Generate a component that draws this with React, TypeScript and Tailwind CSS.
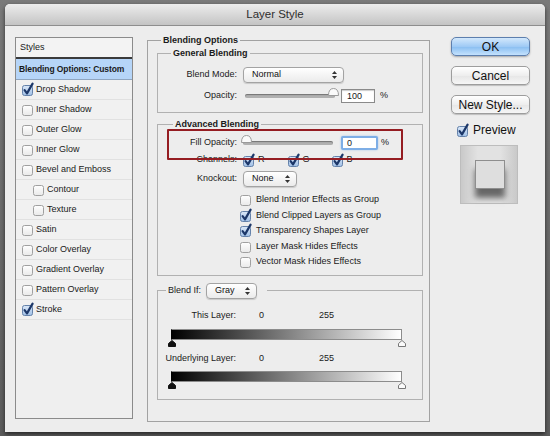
import React from "react";

function Checkbox({ checked = false }: { checked?: boolean }) {
  return (
    <svg width="12" height="13" viewBox="0 0 12 13" className="shrink-0 overflow-visible">
      <defs>
        <linearGradient id="cbu" x1="0" y1="0" x2="0" y2="1">
          <stop offset="0" stopColor="#ffffff" />
          <stop offset="1" stopColor="#e9e9e9" />
        </linearGradient>
        <linearGradient id="cbc" x1="0" y1="0" x2="0" y2="1">
          <stop offset="0" stopColor="#dbe8f8" />
          <stop offset="1" stopColor="#9fbfe6" />
        </linearGradient>
      </defs>
      <rect
        x="0.5"
        y="2.5"
        width="10"
        height="10"
        rx="2"
        fill={checked ? "url(#cbc)" : "url(#cbu)"}
        stroke={checked ? "#6582aa" : "#a0a0a0"}
      />
      {checked && (
        <path
          d="M2.6 7.2 L5 10.4 L10.6 0.6"
          fill="none"
          stroke="#1c3769"
          strokeWidth="2.2"
          strokeLinecap="round"
          strokeLinejoin="round"
        />
      )}
    </svg>
  );
}

function Arrows() {
  return (
    <svg width="5" height="8" viewBox="0 0 5 8" className="shrink-0">
      <path d="M2.5 0 L5 3 H0 Z" fill="#333" />
      <path d="M2.5 8 L5 5 H0 Z" fill="#333" />
    </svg>
  );
}

function Select({ label, className }: { label: string; className: string }) {
  return (
    <div
      className={`flex items-center justify-between h-[16px] rounded-[4px] border border-[#a3a3a3] bg-[linear-gradient(#ffffff,#ebebeb)] shadow-[0_1px_1px_rgba(0,0,0,0.15)] pl-[8px] pr-[6px] text-[9px] text-[#111] ${className}`}
    >
      <span>{label}</span>
      <Arrows />
    </div>
  );
}

function Knob() {
  return (
    <svg width="11" height="8" viewBox="0 0 11 8">
      <path d="M0.5 7.5 Q0.5 0.5 5.5 0.5 Q10.5 0.5 10.5 7.5 Z" fill="#fafafa" stroke="#9a9a9a" />
    </svg>
  );
}

function Slider({ right }: { right?: boolean }) {
  return (
    <div className="relative w-[90px] h-[12px] flex items-center">
      <div className="w-full h-[4px] rounded-full bg-[#b0b0b0] shadow-[inset_0_1px_1px_rgba(0,0,0,0.35)]" />
      <div className={`absolute top-[-2px] ${right ? "right-[-4px]" : "left-[-2px]"}`}>
        <Knob />
      </div>
    </div>
  );
}

function Marker({ dark }: { dark?: boolean }) {
  return (
    <svg width="8" height="7" viewBox="0 0 8 7">
      <path
        d="M4 0.5 L7.5 3.5 V6.5 H0.5 V3.5 Z"
        fill={dark ? "#111" : "#fbfbfb"}
        stroke={dark ? "#111" : "#777"}
        strokeWidth="1"
      />
    </svg>
  );
}

function GradientBar() {
  return (
    <div className="flex flex-col w-[231px]">
      <div className="h-[11px] border border-[#8c8c8c] border-l-black bg-[linear-gradient(to_right,#000000,#ffffff)]" />
      <div className="flex justify-between h-[7px] ml-[-3px] mr-[-4px]">
        <Marker dark />
        <Marker />
      </div>
    </div>
  );
}

function StyleRow({
  label,
  checked,
  indent,
}: {
  label: string;
  checked?: boolean;
  indent?: boolean;
}) {
  return (
    <div
      className={`flex items-center gap-[2px] h-[20px] border-b border-[#e1e1e1] bg-[#f1f1f1] ${
        indent ? "pl-[17px]" : "pl-[6px]"
      }`}
    >
      <Checkbox checked={checked} />
      <span className="text-[9px] text-[#1a1a1a]">{label}</span>
    </div>
  );
}

function Button({ label, primary }: { label: string; primary?: boolean }) {
  return (
    <div
      className={`flex items-center justify-center h-[19px] w-[79px] rounded-[5px] border text-[12px] text-[#111] ${
        primary
          ? "border-[#5d7fae] bg-[linear-gradient(#d3e8fc,#9fcaf5_50%,#88bdf1_51%,#c4e2fd)] shadow-[0_1px_2px_rgba(0,0,0,0.3)]"
          : "border-[#9d9d9d] bg-[linear-gradient(#ffffff,#eeeeee_50%,#e6e6e6_51%,#f6f6f6)] shadow-[0_1px_1px_rgba(0,0,0,0.2)]"
      }`}
    >
      {label}
    </div>
  );
}

export default function App() {
  return (
    <div className="w-[550px] h-[436px] bg-[linear-gradient(#7a7a7a,#5c5c5c)] pt-[4px] px-[5px] font-['Liberation_Sans',Arial,sans-serif] overflow-hidden">
      <div className="w-[540px] h-[428px] bg-[#ededed] rounded-t-[5px] flex flex-col shadow-[0_2px_4px_rgba(0,0,0,0.6)]">
        {/* title bar */}
        <div className="h-[22px] shrink-0 rounded-t-[5px] border-b border-[#8e8e8e] bg-[linear-gradient(#ececec,#c4c4c4)] flex items-center justify-center">
          <span className="text-[11.5px] text-[#2e2e2e]">Layer Style</span>
        </div>

        <div className="flex pl-[10px] pt-[9px]">
          {/* left styles list */}
          <div className="w-[118px] h-[382px] mt-[2px] border border-[#8b8b8b] bg-[#efefef] flex flex-col">
            <div className="h-[19px] flex items-center pl-[4px] text-[9px] text-[#1a1a1a] bg-[#f3f3f3]">
              Styles
            </div>
            <div className="h-[2px] bg-[#3a3a3a]" />
            <div className="h-[21px] flex items-center pl-[3px] bg-[#b6d5f8] border-b border-[#8fa5bf] text-[8.5px] font-bold text-[#1a1a1a] whitespace-nowrap tracking-[-0.1px]">
              Blending Options: Custom
            </div>
            <StyleRow label="Drop Shadow" checked />
            <StyleRow label="Inner Shadow" />
            <StyleRow label="Outer Glow" />
            <StyleRow label="Inner Glow" />
            <StyleRow label="Bevel and Emboss" />
            <StyleRow label="Contour" indent />
            <StyleRow label="Texture" indent />
            <StyleRow label="Satin" />
            <StyleRow label="Color Overlay" />
            <StyleRow label="Gradient Overlay" />
            <StyleRow label="Pattern Overlay" />
            <StyleRow label="Stroke" checked />
          </div>

          {/* main panel */}
          <fieldset className="ml-[14px] w-[283px] h-[387px] border border-[#a2a2a2] pl-[9px] pr-[6px] pt-[2px] text-[9px] text-[#1a1a1a]">
            <legend className="ml-[4px] px-[2px] h-[11px] leading-[11px] font-bold text-[9px]">
              Blending Options
            </legend>

            {/* General Blending */}
            <fieldset className="border border-[#b1b1b1] pb-[8px]">
              <legend className="ml-[13px] px-[2px] h-[11px] leading-[11px] font-bold">
                General Blending
              </legend>
              <div className="flex items-center h-[16px] mt-[8px]">
                <span className="w-[79px] text-right">Blend Mode:</span>
                <Select label="Normal" className="ml-[6px] w-[101px]" />
              </div>
              <div className="flex items-center h-[16px] mt-[5px]">
                <span className="w-[79px] text-right">Opacity:</span>
                <div className="ml-[8px]">
                  <Slider right />
                </div>
                <div className="ml-[6px] w-[34px] h-[14px] border border-[#8a8a8a] bg-white shadow-[inset_0_1px_1px_rgba(0,0,0,0.2)] pl-[5px] leading-[12px]">
                  100
                </div>
                <span className="ml-[5px]">%</span>
              </div>
            </fieldset>

            {/* Advanced Blending */}
            <fieldset className="relative mt-[6px] border border-[#b1b1b1] pb-[5px]">
              <legend className="ml-[15px] px-[2px] h-[11px] leading-[11px] font-bold">
                Advanced Blending
              </legend>
              <div className="flex items-center h-[16px] mt-[5px]">
                <span className="w-[79px] text-right">Fill Opacity:</span>
                <div className="ml-[6px]">
                  <Slider />
                </div>
                <div className="ml-[8px] w-[37px] h-[14px] border-2 border-[#7eaee6] rounded-[2px] bg-white pl-[4px] leading-[10px] shadow-[0_0_2px_#9cc3ef]">
                  0
                </div>
                <span className="ml-[3px]">%</span>
              </div>
              <div className="flex items-center h-[14px] mt-[2px]">
                <span className="w-[79px] text-right">Channels:</span>
                <div className="ml-[6px] flex items-center gap-[3px]">
                  <Checkbox checked />
                  <span>R</span>
                </div>
                <div className="ml-[23px] flex items-center gap-[3px]">
                  <Checkbox checked />
                  <span>G</span>
                </div>
                <div className="ml-[22px] flex items-center gap-[3px]">
                  <Checkbox checked />
                  <span>B</span>
                </div>
              </div>
              <div className="flex items-center h-[16px] mt-[4px]">
                <span className="w-[79px] text-right">Knockout:</span>
                <Select label="None" className="ml-[6px] w-[54px]" />
              </div>
              <div className="flex flex-col mt-[5px] ml-[82px]">
                {[
                  ["Blend Interior Effects as Group", false],
                  ["Blend Clipped Layers as Group", true],
                  ["Transparency Shapes Layer", true],
                  ["Layer Mask Hides Effects", false],
                  ["Vector Mask Hides Effects", false],
                ].map(([t, c]) => (
                  <div key={t as string} className="flex items-center gap-[4px] h-[15.5px]">
                    <Checkbox checked={c as boolean} />
                    <span>{t as string}</span>
                  </div>
                ))}
              </div>
              {/* annotation box */}
              <div className="absolute left-[9px] top-[-1px] w-[236px] h-[31px] border-2 border-[#951d22] rounded-[1px]" />
            </fieldset>

            {/* Blend If */}
            <fieldset className="mt-[7px] border border-[#b1b1b1] pb-[10px]">
              <legend className="ml-[8px] px-[2px] h-[16px] flex items-center gap-[5px]">
                <span>Blend If:</span>
                <Select label="Gray" className="w-[51px]" />
                <span className="w-[3px]" />
              </legend>
              <div className="flex items-center h-[12px] mt-[11px]">
                <span className="w-[78px] text-right">This Layer:</span>
                <span className="ml-[23px]">0</span>
                <span className="ml-[55px]">255</span>
              </div>
              <div className="mt-[7px] ml-[13px]">
                <GradientBar />
              </div>
              <div className="flex items-center h-[12px] mt-[6px]">
                <span className="w-[78px] text-right">Underlying Layer:</span>
                <span className="ml-[23px]">0</span>
                <span className="ml-[55px]">255</span>
              </div>
              <div className="mt-[6px] ml-[13px]">
                <GradientBar />
              </div>
            </fieldset>
          </fieldset>

          {/* right column */}
          <div className="ml-[21px] mt-[2px] flex flex-col">
            <Button label="OK" primary />
            <div className="mt-[10px]">
              <Button label="Cancel" />
            </div>
            <div className="mt-[10px]">
              <Button label="New Style..." />
            </div>
            <div className="mt-[8px] ml-[6px] flex items-center gap-[4px] h-[16px]">
              <Checkbox checked />
              <span className="text-[12px] text-[#111]">Preview</span>
            </div>
            <div className="mt-[7px] ml-[9px] w-[58px] h-[59px] border border-[#bdbdbd] bg-[linear-gradient(to_right,#c9c9c9,#e2e2e2_30%,#e2e2e2_70%,#c9c9c9)] pt-[14px] pl-[14px]">
              <div className="w-[30px] h-[29px] bg-[#dedede] border border-[#8e8e8e] shadow-[0_9px_6px_rgba(0,0,0,0.55)]" />
            </div>
          </div>
        </div>
      </div>
    </div>
  );
}
